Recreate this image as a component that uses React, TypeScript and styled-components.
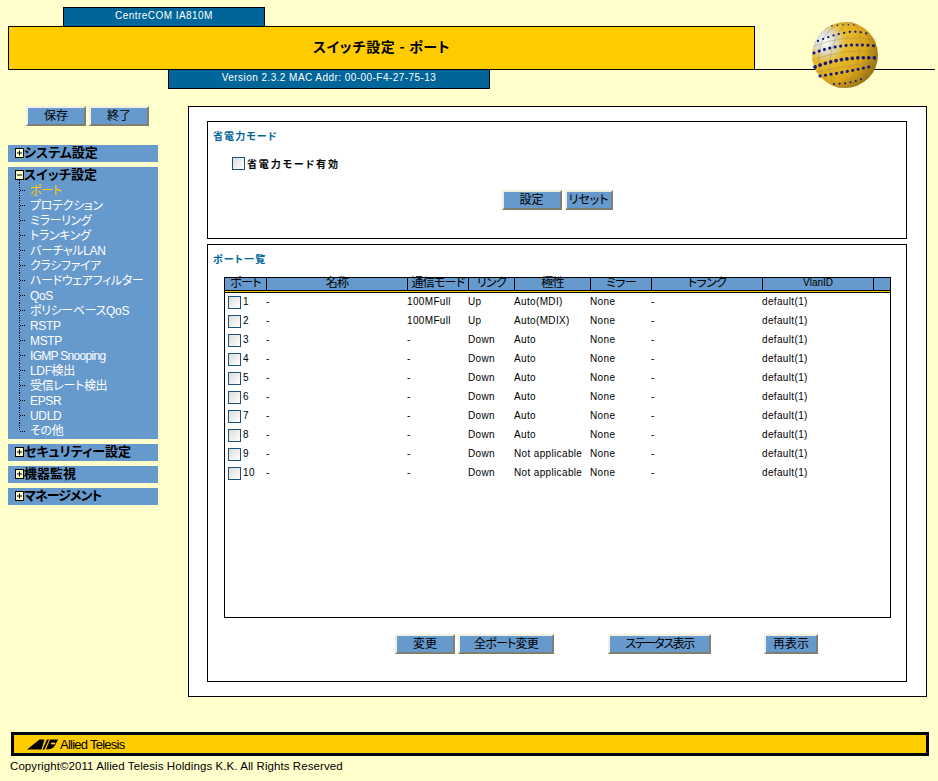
import React from "react";
import styled, { createGlobalStyle } from "styled-components";

const GlobalStyle = createGlobalStyle`
  html, body {
    margin: 0;
    padding: 0;
    background: #ffffcc;
    font-family: "Liberation Sans", "Noto Sans CJK JP", sans-serif;
    font-feature-settings: "palt";
    color: #000;
  }
`;

const Page = styled.div`
  width: 938px;
  height: 781px;
  position: relative;
  overflow: hidden;
`;

const Header = styled.header`
  padding-top: 7px;
  height: 99px;
  box-sizing: border-box;
`;

const Tab = styled.div<{ $left: number; $width: number }>`
  box-sizing: border-box;
  margin-left: ${(p) => p.$left}px;
  width: ${(p) => p.$width}px;
  height: 20px;
  background: #006699;
  border: 1px solid #000;
  color: #fff;
  font-size: 10px;
  letter-spacing: 0.45px;
  line-height: 16px;
  text-align: center;
`;

const BannerRow = styled.div`
  display: flex;
  align-items: flex-end;
  margin-top: -1px;
  margin-bottom: -1px;
  position: relative;
`;

const Banner = styled.h1`
  box-sizing: border-box;
  margin: 0 0 0 8px;
  width: 747px;
  height: 44px;
  background: #ffcc00;
  border: 1px solid #000;
  font-size: 14px;
  font-weight: bold;
  letter-spacing: 0.7px;
  line-height: 38px;
  text-align: center;
  font-family: "Noto Sans CJK JP", sans-serif;
`;

const BannerRule = styled.div`
  width: 180px;
  height: 1px;
  background: #000;
`;

const Globe = styled.svg`
  position: absolute;
  left: 812px;
  top: 22px;
`;

const Body = styled.div`
  display: flex;
  align-items: flex-start;
  height: 633px;
  padding-top: 7px;
  box-sizing: border-box;
`;

const Sidebar = styled.nav`
  width: 150px;
  margin-left: 8px;
  margin-right: 30px;
  flex: none;
`;

const SideButtons = styled.div`
  display: flex;
  gap: 3px;
  margin: 0 0 19px 18px;
`;

const Group = styled.div`
  background: #6699cc;
  margin-bottom: 5px;
  padding: 0 0 1px 7px;
`;

const GroupTitle = styled.div`
  display: flex;
  align-items: center;
  height: 16px;
  font-size: 13px;
  font-weight: bold;
  font-family: "Noto Sans CJK JP", sans-serif;
`;

const GroupLabel = styled.span<{ $tracking?: number }>`
  line-height: 16px;
  margin-top: -2px;
  letter-spacing: ${(p) => p.$tracking ?? 0}px;
`;

const Expander = styled.svg`
  flex: none;
`;

const NavItem = styled.div<{ $active?: boolean; $tight?: boolean }>`
  display: flex;
  align-items: center;
  height: 15px;
  color: ${(p) => (p.$active ? "#ffcc00" : "#fff")};
  font-size: 12px;
  letter-spacing: ${(p) => (p.$tight ? "-0.7px" : "-0.35px")};
  white-space: nowrap;
  line-height: 15px;
`;

const NavLabel = styled.span`
  margin-top: 2px;
`;

const Main = styled.main`
  box-sizing: border-box;
  width: 739px;
  height: 591px;
  background: #fff;
  border: 1px solid #000;
  padding: 14px 18px;
  flex: none;
`;

const Panel = styled.section<{ $height: number }>`
  box-sizing: border-box;
  height: ${(p) => p.$height}px;
  width: 700px;
  border: 1px solid #000;
  margin-bottom: 5px;
  padding: 6px 5px;
`;

const PanelTitle = styled.h2`
  margin: 0;
  color: #006699;
  font-size: 10px;
  font-weight: bold;
  letter-spacing: 1.1px;
  line-height: 15px;
  font-family: "Noto Sans CJK JP", sans-serif;
`;

const CheckRow = styled.label`
  display: flex;
  align-items: center;
  margin: 13px 0 0 19px;
  gap: 2px;
  font-size: 10px;
  font-weight: bold;
  letter-spacing: 1.85px;
  font-family: "Noto Sans CJK JP", sans-serif;
`;

const Box = styled.span`
  box-sizing: border-box;
  display: block;
  flex: none;
  width: 13px;
  height: 13px;
  border: 1px solid #1c5180;
  background: linear-gradient(135deg, #dcdcd7, #ffffff);
`;

const ButtonRow = styled.div`
  display: flex;
  justify-content: center;
  gap: 3px;
  margin-top: 19px;
`;

const Button = styled.button<{ $width: number; $gapLeft?: number; $tracking?: number }>`
  box-sizing: border-box;
  width: ${(p) => p.$width}px;
  height: 20px;
  margin: 0 0 0 ${(p) => p.$gapLeft ?? 0}px;
  padding: 0 0 2px;
  background: #6699cc;
  border: 2px solid;
  border-color: #f0f0e0 #808070 #808070 #f0f0e0;
  font-family: "Noto Sans CJK JP", sans-serif;
  font-feature-settings: "palt";
  font-size: 12px;
  letter-spacing: ${(p) => p.$tracking ?? 0}px;
  line-height: 14px;
  color: #000;
  white-space: nowrap;
`;

const TableBox = styled.div`
  box-sizing: border-box;
  width: 667px;
  height: 341px;
  margin: 11px 0 0 11px;
  border: 1px solid #000;
`;

const COLS = "42px 141px 61px 46px 76px 61px 111px 111px 1fr";

const HeadRow = styled.div`
  display: grid;
  grid-template-columns: ${COLS};
  height: 12px;
  background: #6699cc;
  border-bottom: 1px solid #000;
`;

const HeadCell = styled.div<{ $latin?: boolean }>`
  border-right: 1px solid #000;
  font-size: ${(p) => (p.$latin ? "10px" : "12px")};
  letter-spacing: ${(p) => (p.$latin ? "0" : "-0.7px")};
  line-height: 10px;
  text-align: center;
  white-space: nowrap;

  &:last-child {
    border-right: 0;
  }
`;

const HeadStripe = styled.div`
  height: 1px;
  background: #ffcc00;
  border-bottom: 1px solid #000;
`;

const Row = styled.div`
  display: grid;
  grid-template-columns: ${COLS};
  height: 19px;
  align-items: center;
  font-size: 10px;
  letter-spacing: 0.35px;
`;

const PortCell = styled.div`
  display: flex;
  align-items: center;
  gap: 2px;
  padding-left: 3px;
`;

const PortNumber = styled.span`
  margin-bottom: 3px;
`;

const Cell = styled.div`
  white-space: nowrap;
  margin-left: -1px;
  padding-bottom: 3px;
`;

const BottomButtons = styled.div`
  display: flex;
  margin: 16px 0 0 182px;
`;

const Footer = styled.footer`
  margin-left: 11px;
  width: 918px;
  height: 24px;
  box-sizing: border-box;
  background: #ffcc00;
  border: 3px solid #000;
  display: flex;
  align-items: center;
  padding-left: 13px;
`;

const Wordmark = styled.span`
  font-size: 13px;
  letter-spacing: -0.75px;
  margin-left: 2px;
`;

const Copyright = styled.div`
  margin: 3px 0 0 10px;
  font-size: 11.5px;
  line-height: 14px;
  letter-spacing: 0.08px;
`;

const PlusBox = ({ open }: { open?: boolean }) => (
  <Expander width="9" height="16" viewBox="0 0 9 16">
    <rect x="0.5" y="3.5" width="8" height="9" fill="#ffffcc" stroke="#000" />
    <path d="M2 8h5" stroke="#000" />
    {!open && <path d="M4.5 5.5v5" stroke="#000" />}
    {open && <path d="M4.5 13v3" stroke="#000" strokeDasharray="1 1" />}
  </Expander>
);

const Branch = ({ last }: { last?: boolean }) => (
  <svg width="15" height="15" viewBox="0 0 15 15" style={{ flex: "none" }}>
    <path
      d={last ? "M4.5 0v8M5 8.5h6" : "M4.5 0v15M5 7.5h6"}
      stroke="#000"
      strokeDasharray="1 1"
      fill="none"
    />
  </svg>
);

const navItems = [
  "ポート",
  "プロテクション",
  "ミラーリング",
  "トランキング",
  "バーチャルLAN",
  "クラシファイア",
  "ハードウェアフィルター",
  "QoS",
  "ポリシーベースQoS",
  "RSTP",
  "MSTP",
  "IGMP Snooping",
  "LDF検出",
  "受信レート検出",
  "EPSR",
  "UDLD",
  "その他",
];

const headers = ["ポート", "名称", "通信モード", "リンク", "極性", "ミラー", "トランク", "VlanID", ""];

const ports = [
  ["1", "100MFull", "Up", "Auto(MDI)"],
  ["2", "100MFull", "Up", "Auto(MDIX)"],
  ["3", "-", "Down", "Auto"],
  ["4", "-", "Down", "Auto"],
  ["5", "-", "Down", "Auto"],
  ["6", "-", "Down", "Auto"],
  ["7", "-", "Down", "Auto"],
  ["8", "-", "Down", "Auto"],
  ["9", "-", "Down", "Not applicable"],
  ["10", "-", "Down", "Not applicable"],
];

// bands of little navy diamonds that wrap around the ball
const bands = [
  { d: "M20 4 Q30 2 42 3", w: 1.5 },
  { d: "M6 19 Q20 13 36 10 Q48 9 56 12", w: 2.2 },
  { d: "M2 31 Q30 20 64 24", w: 3 },
  { d: "M3 45 Q30 34 65 36", w: 3.6 },
  { d: "M8 54 Q35 50 61 44", w: 3 },
  { d: "M22 62 Q38 62 52 56", w: 2 },
];

const GlobeIcon = () => (
  <Globe width="66" height="66" viewBox="0 0 66 66">
    <defs>
      <radialGradient id="ball" cx="0.2" cy="0.3" r="0.9">
        <stop offset="0" stopColor="#ffffff" />
        <stop offset="0.16" stopColor="#dcdcd4" />
        <stop offset="0.34" stopColor="#e8bc30" />
        <stop offset="0.68" stopColor="#dca618" />
        <stop offset="1" stopColor="#86660e" />
      </radialGradient>
    </defs>
    <circle cx="33" cy="33" r="33" fill="url(#ball)" />
    <g fill="none" stroke="#a08850" strokeWidth="0.6" opacity="0.7">
      <ellipse cx="33" cy="33" rx="14" ry="33" transform="rotate(12 33 33)" />
      <ellipse cx="33" cy="33" rx="26" ry="33" transform="rotate(12 33 33)" />
      <path d="M2 24 Q33 12 64 18M0 38 Q33 26 66 30M4 50 Q33 44 63 40" />
    </g>
    <g fill="none" stroke="#16167a" strokeLinecap="round">
      {bands.map((b) => (
        <path key={b.d} d={b.d} strokeWidth={b.w} strokeDasharray="0.1 5.4" />
      ))}
    </g>
  </Globe>
);

const LogoMark = () => (
  <svg width="31" height="11" viewBox="0 0 31 11" style={{ flex: "none" }}>
    <path d="M0 10.5 L12.5 0.5 H17.5 L14.5 10.5Z" fill="#000" />
    <path d="M15.5 10.5 L20 0.5 H22 L17.5 10.5Z" fill="#000" />
    <path d="M19 10.5 L23 0.5 H31 L28 6.5 C26 9.5 23 10.5 19 10.5Z" fill="#000" />
    <ellipse cx="26" cy="4.5" rx="2.4" ry="1.1" fill="#ffcc00" />
  </svg>
);

export default function App() {
  return (
    <Page>
      <GlobalStyle />
      <Header>
        <Tab $left={63} $width={202}>CentreCOM IA810M</Tab>
        <BannerRow>
          <Banner>スイッチ設定 - ポート</Banner>
          <BannerRule />
        </BannerRow>
        <Tab $left={168} $width={322}>Version 2.3.2 MAC Addr: 00-00-F4-27-75-13</Tab>
      </Header>
      <GlobeIcon />
      <Body>
        <Sidebar>
          <SideButtons>
            <Button $width={60}>保存</Button>
            <Button $width={60}>終了</Button>
          </SideButtons>
          <Group>
            <GroupTitle><PlusBox /><GroupLabel>システム設定</GroupLabel></GroupTitle>
          </Group>
          <Group>
            <GroupTitle><PlusBox open /><GroupLabel>スイッチ設定</GroupLabel></GroupTitle>
            {navItems.map((item, i) => (
              <NavItem key={item} $active={i === 0} $tight={item === "IGMP Snooping"}>
                <Branch last={i === navItems.length - 1} />
                <NavLabel>{item}</NavLabel>
              </NavItem>
            ))}
          </Group>
          <Group>
            <GroupTitle><PlusBox /><GroupLabel>セキュリティー設定</GroupLabel></GroupTitle>
          </Group>
          <Group>
            <GroupTitle><PlusBox /><GroupLabel>機器監視</GroupLabel></GroupTitle>
          </Group>
          <Group>
            <GroupTitle><PlusBox /><GroupLabel $tracking={-1}>マネージメント</GroupLabel></GroupTitle>
          </Group>
        </Sidebar>
        <Main>
          <Panel $height={118}>
            <PanelTitle>省電力モード</PanelTitle>
            <CheckRow><Box />省電力モード有効</CheckRow>
            <ButtonRow>
              <Button $width={60}>設定</Button>
              <Button $width={48}>リセット</Button>
            </ButtonRow>
          </Panel>
          <Panel $height={438}>
            <PanelTitle>ポート一覧</PanelTitle>
            <TableBox>
              <HeadRow>
                {headers.map((h, i) => (
                  <HeadCell key={i} $latin={h === "VlanID"}>{h}</HeadCell>
                ))}
              </HeadRow>
              <HeadStripe />
              {ports.map(([port, speed, link, polarity]) => (
                <Row key={port}>
                  <PortCell><Box /><PortNumber>{port}</PortNumber></PortCell>
                  <Cell>-</Cell>
                  <Cell>{speed}</Cell>
                  <Cell>{link}</Cell>
                  <Cell>{polarity}</Cell>
                  <Cell>None</Cell>
                  <Cell>-</Cell>
                  <Cell>default(1)</Cell>
                </Row>
              ))}
            </TableBox>
            <BottomButtons>
              <Button $width={60}>変更</Button>
              <Button $width={96} $gapLeft={3} $tracking={-0.8}>全ポート変更</Button>
              <Button $width={103} $gapLeft={54} $tracking={-1.5}>ステータス表示</Button>
              <Button $width={54} $gapLeft={53}>再表示</Button>
            </BottomButtons>
          </Panel>
        </Main>
      </Body>
      <Footer>
        <LogoMark />
        <Wordmark>Allied Telesis</Wordmark>
      </Footer>
      <Copyright>Copyright©2011 Allied Telesis Holdings K.K. All Rights Reserved</Copyright>
    </Page>
  );
}
